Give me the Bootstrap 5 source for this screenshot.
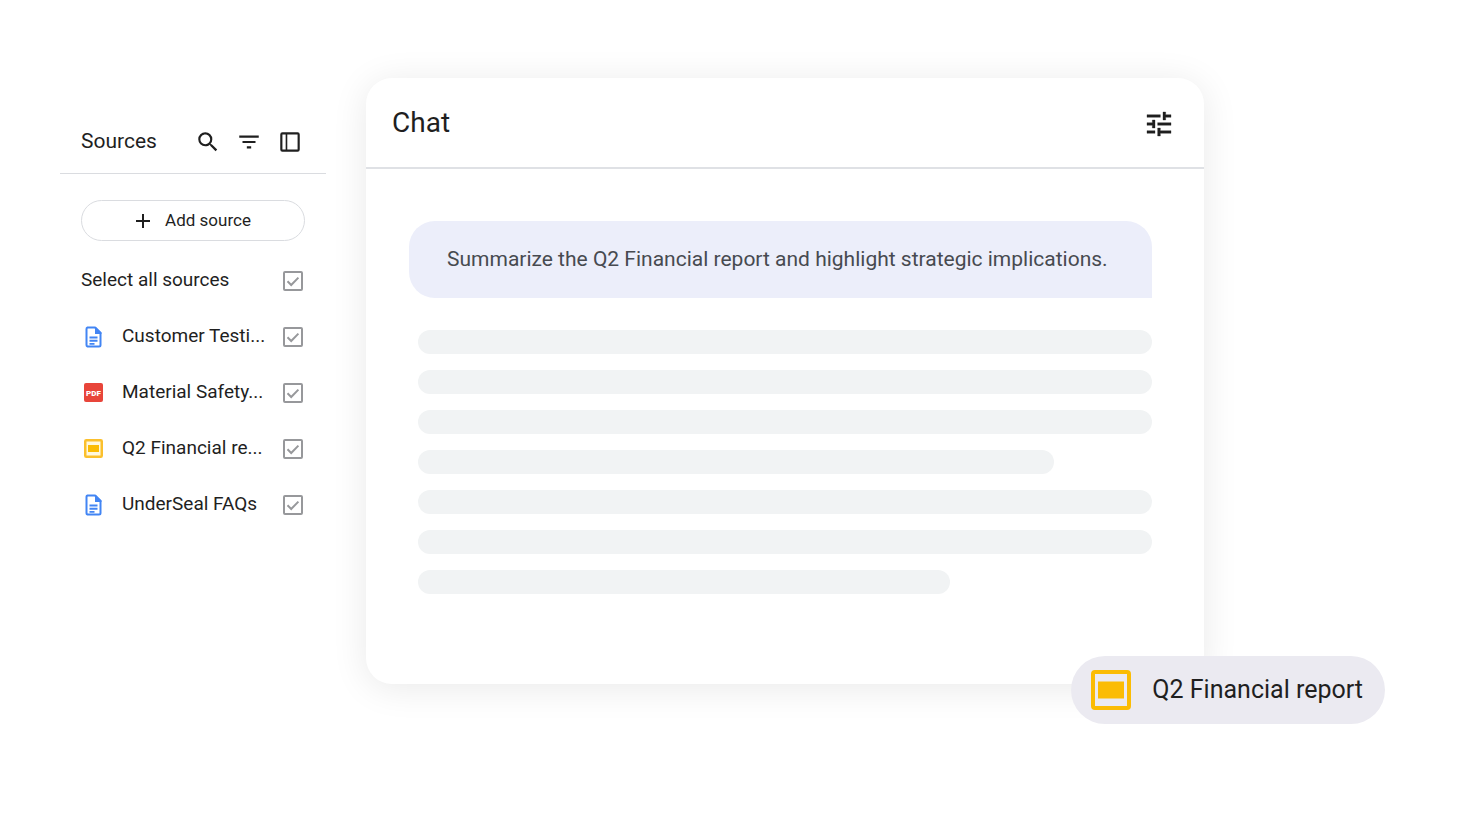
<!DOCTYPE html>
<html lang="en">
<head>
<meta charset="utf-8">
<meta name="viewport" content="width=device-width, initial-scale=1">
<title>Sources and chat</title>
<link href="https://cdn.jsdelivr.net/npm/bootstrap@5.3.0/dist/css/bootstrap.min.css" rel="stylesheet">
<style>
  body { font-family: Roboto, "Liberation Sans", sans-serif; color: #1f1f1f; background: #fff; }
  svg { display: block; flex: none; }
  .workspace { gap: 40px; padding: 78px 268px 60px 60px; }
  .sources-panel { flex: 0 0 266px; padding-top: 30px; }
  .sources-head { height: 66px; padding: 0 23px 0 21px; border-bottom: 1px solid #dadce0; }
  .sources-title { font-size: 21px; line-height: 26px; }
  .tool-group { gap: 15px; }
  .icon-button { padding: 2px 0 0; border: 0; background: none; color: #1f1f1f; }
  .sources-body { padding: 26px 21px 0; }
  .add-source { height: 41px; gap: 14px; border: 1px solid #dadce0; border-radius: 21px; background: #fff; color: #1f1f1f; font-size: 17px; }
  .source-list { margin-top: 12px; font-size: 19px; line-height: 24px; }
  .source-row { height: 56px; gap: 16px; }
  .source-row label { flex: 1; padding-bottom: 3px; }
  .source-row .form-check-input {
    width: 20px; height: 20px; margin: 0 2px 0 0; flex: none;
    border: 2px solid #97989b; border-radius: 2px; background-color: #fff;
  }
  .source-row .form-check-input:checked {
    background: #fff url("data:image/svg+xml,%3Csvg xmlns='http://www.w3.org/2000/svg' viewBox='0 0 16 16'%3E%3Cpath d='M2.5 8.3 6.2 12 13.4 4.6' fill='none' stroke='%2397989b' stroke-width='2'/%3E%3C/svg%3E") center / 16px no-repeat;
    border-color: #97989b;
  }
  .source-icon { margin-right: -1px; }
  .pdf-label { font: 900 8px Roboto, sans-serif; fill: #fff; }
  .chat-panel { min-width: 0; border-radius: 26px; background: #fff; box-shadow: 0 4px 36px rgba(0, 0, 0, .09); }
  .chat-head { height: 91px; padding: 0 29px 0 26px; border-bottom: 2px solid #dfe1e5; }
  .chat-title { font-size: 28px; line-height: 34px; }
  .chat-body { padding: 52px 52px 90px 43px; }
  .prompt-bubble { padding: 23px 32px 24px 38px; border-radius: 26px 26px 0 26px; background: #eceefa; color: #474a50; font-size: 21px; line-height: 30px; }
  .answer { gap: 16px; margin: 32px 0 0 9px; }
  .answer-line { height: 24px; border-radius: 12px; background: #f1f3f4; }
  .source-chip { right: -181px; bottom: -40px; height: 68px; gap: 17px; padding: 0 22px 0 16px; border-radius: 34px; background: #ebeaf1; font-size: 25px; white-space: nowrap; }
</style>
</head>
<body>
<div class="workspace d-flex align-items-stretch">
  <aside class="sources-panel">
    <header class="sources-head d-flex align-items-center justify-content-between">
      <h2 class="sources-title fw-normal mb-0">Sources</h2>
      <div class="tool-group d-flex">
        <button class="icon-button" type="button" aria-label="Search"><svg width="26" height="26" viewBox="0 0 24 24" fill="currentColor"><path d="M15.5 14h-.79l-.28-.27A6.47 6.47 0 0 0 16 9.5 6.5 6.5 0 1 0 9.5 16c1.61 0 3.09-.59 4.23-1.57l.27.28v.79l5 4.99L20.49 19l-4.99-5zm-6 0C7.01 14 5 11.99 5 9.5S7.01 5 9.5 5 14 7.01 14 9.5 11.99 14 9.5 14z"/></svg></button>
        <button class="icon-button" type="button" aria-label="Filter"><svg width="26" height="26" viewBox="0 0 24 24" fill="currentColor"><path d="M10 18h4v-2h-4v2zM3 6v2h18V6H3zm3 7h12v-2H6v2z"/></svg></button>
        <button class="icon-button" type="button" aria-label="Toggle panel"><svg width="26" height="26" viewBox="0 0 24 24" fill="currentColor"><path fill-rule="evenodd" d="M5 3h14a2 2 0 0 1 2 2v14a2 2 0 0 1-2 2H5a2 2 0 0 1-2-2V5a2 2 0 0 1 2-2zm0 2v14h3V5H5zm4.500 0v14h9.500V5h-9.500z"/></svg></button>
      </div>
    </header>
    <div class="sources-body">
      <button class="add-source w-100 d-flex align-items-center justify-content-center" type="button">
        <svg width="16" height="16" viewBox="0 0 16 16" fill="none" stroke="currentColor" stroke-width="2"><path d="M8 1v14M1 8h14"/></svg>
        Add source
      </button>
      <ul class="source-list list-unstyled mb-0">
        <li class="source-row d-flex align-items-center">
          <label for="all">Select all sources</label>
          <input class="form-check-input" type="checkbox" id="all" checked>
        </li>
        <li class="source-row d-flex align-items-center">
          <svg class="source-icon" width="26" height="26" viewBox="0 0 26 26"><path d="M6.500 3.500H14l5.500 5.500V21a1.500 1.500 0 0 1-1.500 1.500H6.500A1.500 1.500 0 0 1 5.500 21V5a1.500 1.500 0 0 1 1-1.500z" fill="none" stroke="#4285f4" stroke-width="2"/><path d="M14 3h1l5.500 5.500V10H14zM8.500 12.500h8v2h-8zM8.500 15.800h8v1.900h-8zM8.500 19h5v1.700h-5z" fill="#4285f4"/></svg>
          <label class="text-nowrap" for="s1">Customer Testi...</label>
          <input class="form-check-input" type="checkbox" id="s1" checked>
        </li>
        <li class="source-row d-flex align-items-center">
          <svg class="source-icon" width="26" height="26" viewBox="0 0 26 26"><rect x="3" y="3" width="19" height="19" rx="2" fill="#e8453a"/><text class="pdf-label" x="12.500" y="15.500" text-anchor="middle">PDF</text></svg>
          <label class="text-nowrap" for="s2">Material Safety...</label>
          <input class="form-check-input" type="checkbox" id="s2" checked>
        </li>
        <li class="source-row d-flex align-items-center">
          <svg class="source-icon" width="26" height="26" viewBox="0 0 26 26"><rect x="4.250" y="4.250" width="16.500" height="16.500" rx="1" fill="#fff8df" stroke="#fbc02d" stroke-width="2.500"/><path d="M7 9h11v7H7z" fill="#fbbc04"/></svg>
          <label class="text-nowrap" for="s3">Q2 Financial re...</label>
          <input class="form-check-input" type="checkbox" id="s3" checked>
        </li>
        <li class="source-row d-flex align-items-center">
          <svg class="source-icon" width="26" height="26" viewBox="0 0 26 26"><path d="M6.500 3.500H14l5.500 5.500V21a1.500 1.500 0 0 1-1.500 1.500H6.500A1.500 1.500 0 0 1 5.500 21V5a1.500 1.500 0 0 1 1-1.500z" fill="none" stroke="#4285f4" stroke-width="2"/><path d="M14 3h1l5.500 5.500V10H14zM8.500 12.500h8v2h-8zM8.500 15.800h8v1.900h-8zM8.500 19h5v1.700h-5z" fill="#4285f4"/></svg>
          <label class="text-nowrap" for="s4">UnderSeal FAQs</label>
          <input class="form-check-input" type="checkbox" id="s4" checked>
        </li>
      </ul>
    </div>
  </aside>

  <main class="chat-panel position-relative flex-grow-1">
    <header class="chat-head d-flex align-items-center justify-content-between">
      <h1 class="chat-title fw-normal mb-0">Chat</h1>
      <button class="icon-button" type="button" aria-label="Chat settings"><svg width="32" height="32" viewBox="0 0 24 24" fill="currentColor" stroke="currentColor" stroke-width=".25"><path d="M3 17v2h6v-2H3zM3 5v2h10V5H3zm10 16v-2h8v-2h-8v-2h-2v6h2zM7 9v2H3v2h4v2h2V9H7zm14 4v-2H11v2h10zm-6-4h2V7h4V5h-4V3h-2v6z"/></svg></button>
    </header>
    <div class="chat-body">
      <p class="prompt-bubble mb-0">Summarize the Q2 Financial report and highlight strategic implications.</p>
      <div class="answer d-flex flex-column" aria-hidden="true">
        <div class="answer-line"></div>
        <div class="answer-line"></div>
        <div class="answer-line"></div>
        <div class="answer-line" style="width: 86.6%"></div>
        <div class="answer-line"></div>
        <div class="answer-line"></div>
        <div class="answer-line" style="width: 72.5%"></div>
      </div>
    </div>
    <div class="source-chip position-absolute d-flex align-items-center">
      <svg width="48" height="48" viewBox="0 0 48 48"><rect x="6" y="6" width="36" height="36" rx="2" fill="none" stroke="#fbbc04" stroke-width="4"/><path d="M11 15.500h26v17H11z" fill="#fbbc04"/></svg>
      <span>Q2 Financial report</span>
    </div>
  </main>
</div>
<script src="https://cdn.jsdelivr.net/npm/bootstrap@5.3.0/dist/js/bootstrap.bundle.min.js"></script>
</body>
</html>
